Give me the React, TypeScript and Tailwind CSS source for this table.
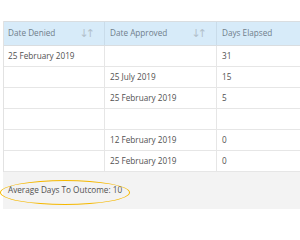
interface Row {
  denied: string;
  approved: string;
  days: string;
}

const rows: Row[] = [
  { denied: '25 February 2019', approved: '', days: '31' },
  { denied: '', approved: '25 July 2019', days: '15' },
  { denied: '', approved: '25 February 2019', days: '5' },
  { denied: '', approved: '', days: '' },
  { denied: '', approved: '12 February 2019', days: '0' },
  { denied: '', approved: '25 February 2019', days: '0' },
];

function SortIcon() {
  return (
    <span className="text-[#b3c1cc] text-[11px] tracking-[-3px] leading-none select-none font-['DejaVu_Sans',sans-serif]">
      ↓↑
    </span>
  );
}

export default function App() {
  return (
    <div className="relative w-[300px] h-[240px] bg-white overflow-hidden font-['Open_Sans',sans-serif]">
      <div className="pt-[21px] pl-[3px]">
        <div className="border-l border-[#e2e2e2]">
          {/* header */}
          <div className="grid grid-cols-[101px_112px_1fr] h-[25px] bg-[#d7ebf9] border-t border-b border-[#d9dde0] text-[8.2px] text-[#707e8b]">
            <div className="flex items-center justify-between pl-[4px] pr-[12px] border-r border-[#c9dcea]">
              <span>Date Denied</span>
              <SortIcon />
            </div>
            <div className="flex items-center justify-between pl-[5px] pr-[12px] border-r border-[#c9dcea]">
              <span>Date Approved</span>
              <SortIcon />
            </div>
            <div className="flex items-center pl-[5px]">
              <span>Days Elapsed</span>
            </div>
          </div>
          {/* body */}
          {rows.map((r, i) => (
            <div
              key={i}
              className="grid grid-cols-[101px_112px_1fr] h-[21px] border-b border-[#e6e6e6] text-[8.2px] text-[#505050]"
            >
              <div className="flex items-center pl-[4px] border-r border-[#e6e6e6]">{r.denied}</div>
              <div className="flex items-center pl-[5px] border-r border-[#e6e6e6]">{r.approved}</div>
              <div className="flex items-center pl-[5px]">{r.days}</div>
            </div>
          ))}
        </div>
        <div className="h-[37px] bg-[#f3f3f3] flex items-center pl-[5px] text-[8.2px] text-[#505050]">
          Average Days To Outcome: 10
        </div>
      </div>
      <div className="absolute left-0 top-[180px] w-[130px] h-[25px] rounded-[50%] border-[1.5px] border-[#f5b800]" />
    </div>
  );
}
